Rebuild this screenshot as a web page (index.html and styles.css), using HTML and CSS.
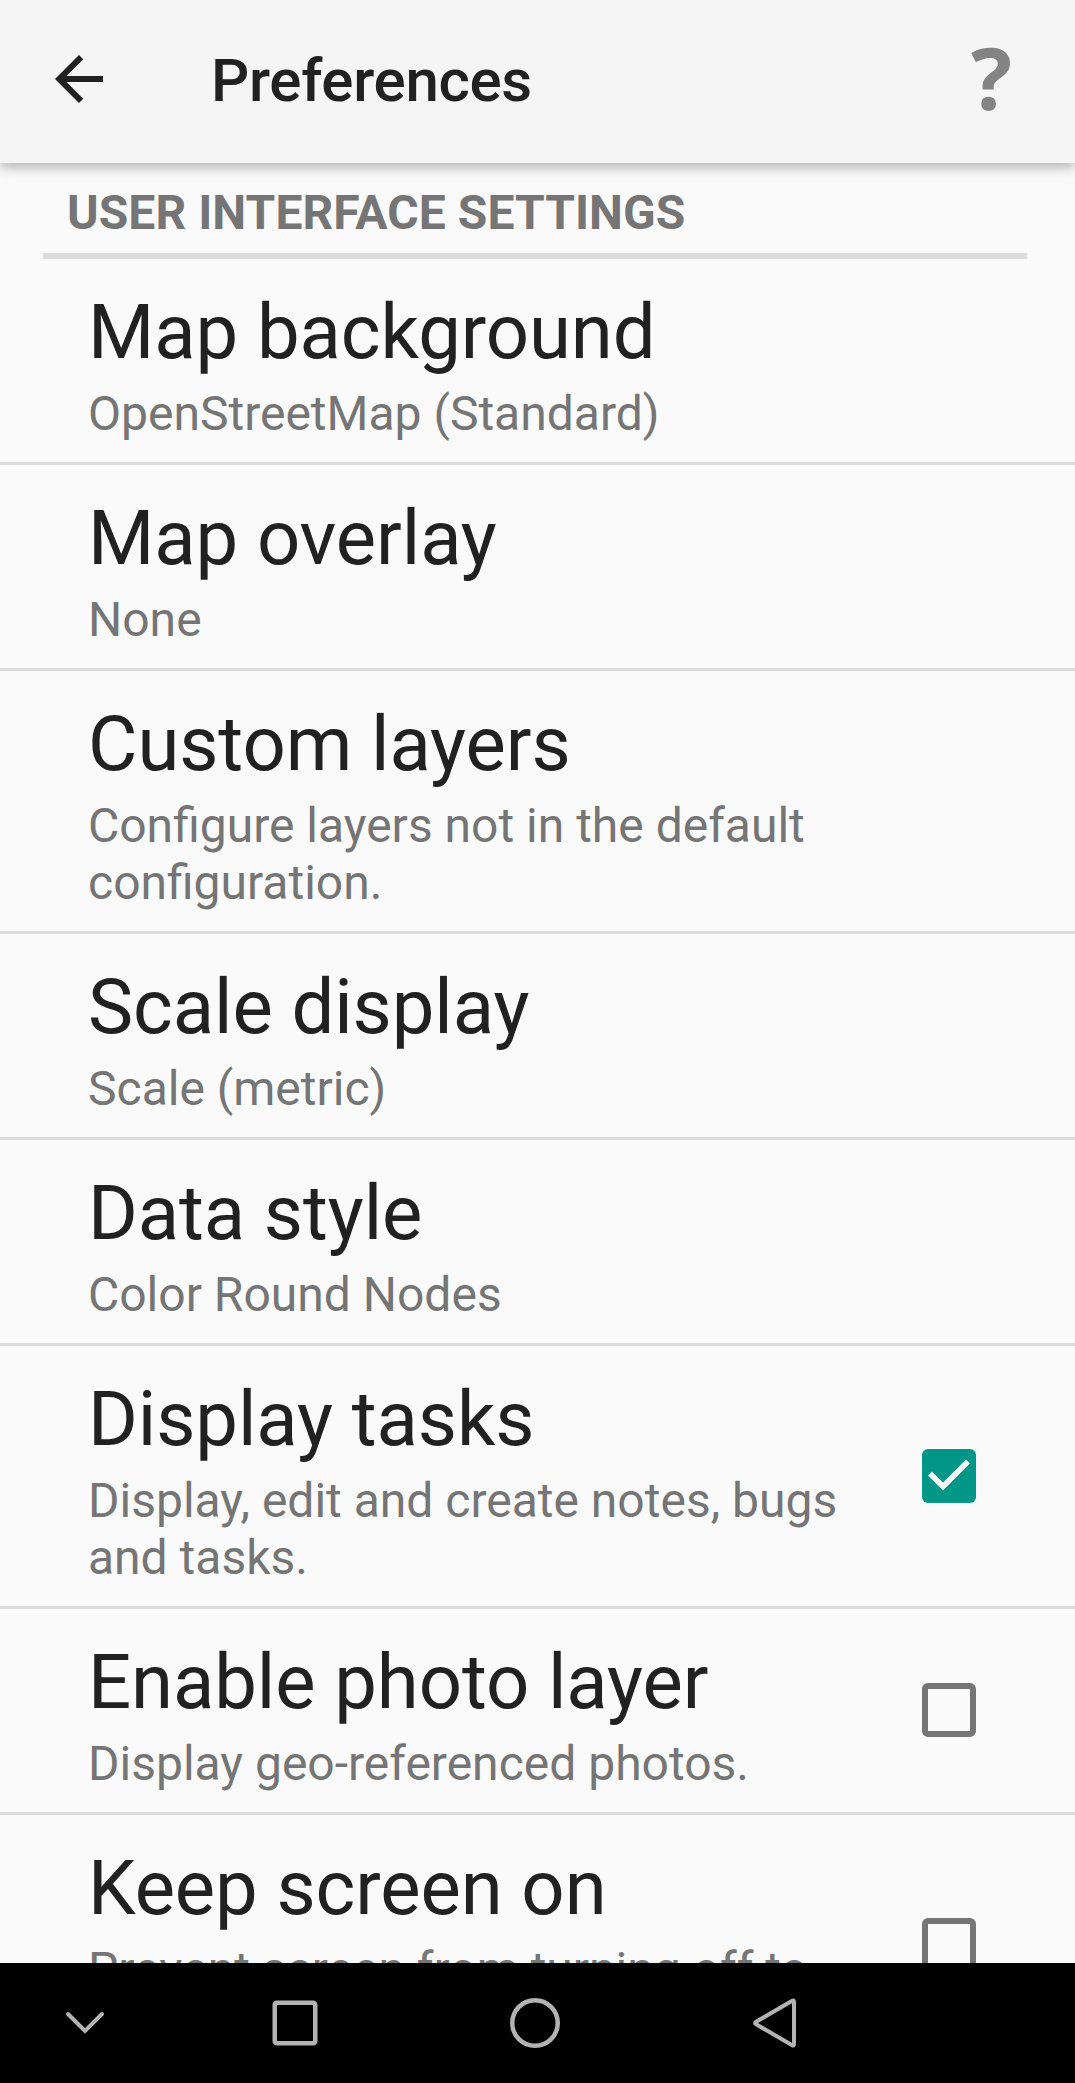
FILE: index.html
```html
<!DOCTYPE html>
<html lang="en">
<head>
<meta charset="utf-8">
<title>Preferences</title>
<link rel="stylesheet" href="styles.css">
</head>
<body>
<div class="screen">
  <header class="app-bar">
    <svg class="back" viewBox="0 0 24 24" aria-label="Back"><path d="M20 11H7.83l5.59-5.59L12 4l-8 8 8 8 1.41-1.41L7.83 13H20z"/></svg>
    <h1 class="app-title">Preferences</h1>
    <span class="help">?</span>
  </header>
  <main class="settings">
    <h2 class="category">USER INTERFACE SETTINGS</h2>
    <section class="item"><div class="text"><div class="title">Map background</div><div class="summary">OpenStreetMap (Standard)</div></div></section>
    <section class="item"><div class="text"><div class="title">Map overlay</div><div class="summary">None</div></div></section>
    <section class="item"><div class="text"><div class="title">Custom layers</div><div class="summary">Configure layers not in the default configuration.</div></div></section>
    <section class="item"><div class="text"><div class="title">Scale display</div><div class="summary">Scale (metric)</div></div></section>
    <section class="item"><div class="text"><div class="title">Data style</div><div class="summary">Color Round Nodes</div></div></section>
    <section class="item"><div class="text"><div class="title">Display tasks</div><div class="summary">Display, edit and create notes, bugs and tasks.</div></div>
      <span class="checkbox checked"><svg class="tick" viewBox="0 0 54 54"><path d="M8 24.5L21 37.5L46 12.5"/></svg></span></section>
    <section class="item"><div class="text"><div class="title">Enable photo layer</div><div class="summary">Display geo-referenced photos.</div></div>
      <span class="checkbox"></span></section>
    <section class="item"><div class="text"><div class="title">Keep screen on</div><div class="summary two-line">Prevent screen from turning off to</div></div>
      <span class="checkbox"></span></section>
  </main>
  <nav class="nav-bar">
    <svg class="nav-icon" viewBox="0 0 60 60"><path d="M13 21L30 38L47 21" stroke-width="4" stroke-linecap="round"/></svg>
    <svg class="nav-icon recents" viewBox="0 0 60 60"><rect x="9.75" y="9.75" width="40.5" height="40.5" rx="2"/></svg>
    <svg class="nav-icon home" viewBox="0 0 60 60"><circle cx="30" cy="30" r="22.75"/></svg>
    <svg class="nav-icon previous" viewBox="0 0 60 60"><path d="M47.2 7.8Q49 6.8 49 8.8V51.2Q49 53.2 47.2 52.2L11.2 31.3Q9 30 11.2 28.7Z" stroke-width="4"/></svg>
  </nav>
</div>
</body>
</html>
```
FILE: styles.css
```css
* { box-sizing: border-box; }

body {
  margin: 0;
  background: #fafafa;
  font-family: Roboto, sans-serif;
  color: #212121;
}

.screen {
  display: flex;
  flex-direction: column;
  height: 2083px;
  overflow: hidden;
}

.app-bar {
  display: flex;
  flex: none;
  align-items: flex-start;
  height: 163px;
  padding: 43px 63px 0 43px;
  background: #f5f5f5;
  box-shadow: 0 4px 12px rgba(0, 0, 0, 0.3);
  z-index: 1;
}

.back {
  width: 72px;
  height: 72px;
  fill: #212121;
}

.app-title {
  margin: 3px 0 0 96px;
  font-size: 60px;
  font-weight: 500;
  line-height: 70px;
  letter-spacing: -0.3px;
}

.help {
  margin: -25px 0 0 auto;
  font-family: "Open Sans", sans-serif;
  font-size: 86px;
  font-weight: 700;
  line-height: 117px;
  color: #848484;
}

.settings {
  flex: 1;
  min-height: 0;
  overflow: hidden;
}

.category {
  height: 96px;
  margin: 0 48px 0 43px;
  padding: 21px 0 0 24px;
  border-bottom: 6px solid #dcdcdc;
  font-size: 48px;
  font-weight: 700;
  line-height: 57px;
  letter-spacing: 0.07px;
  color: #757575;
}

.item {
  display: flex;
  align-items: center;
  justify-content: space-between;
  padding: 0 99px 0 88px;
}

.item + .item { border-top: 3px solid #dcdcdc; }

.text {
  width: 780px;
  padding: 29px 0 20px;
}

.title {
  font-size: 76px;
  line-height: 89px;
  letter-spacing: -0.08px;
  white-space: nowrap;
}

.summary {
  margin-top: 8px;
  font-size: 48px;
  line-height: 57px;
  color: #757575;
}

.two-line { min-height: 114px; }

.checkbox {
  flex: none;
  width: 54px;
  height: 54px;
  margin-bottom: 1px;
  border: 6px solid #757575;
  border-radius: 6px;
}

.checked {
  margin-bottom: 0;
  border: 0;
  background: #009688;
}

.tick {
  display: block;
  fill: none;
  stroke: #fafafa;
  stroke-width: 5.5;
}

.nav-bar {
  display: flex;
  flex: none;
  align-items: center;
  height: 120px;
  padding-left: 55px;
  background: #000;
}

.nav-icon {
  width: 60px;
  height: 60px;
  fill: none;
  stroke: #b3b3b3;
  stroke-width: 4.5;
}

.recents { margin-left: 150px; }
.home, .previous { margin-left: 180px; }
```
